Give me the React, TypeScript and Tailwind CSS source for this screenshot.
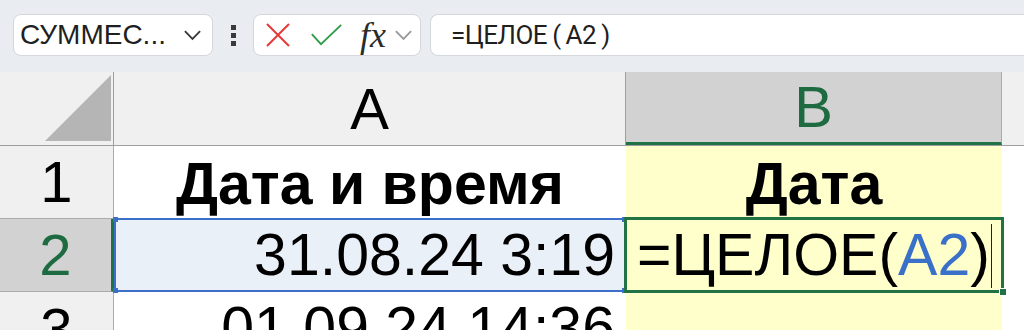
import React from "react";

const cellFont = { fontFamily: '"Liberation Sans", Arial, sans-serif' };

function Chevron({ className }: { className?: string }) {
  return (
    <svg viewBox="0 0 20 12" className={className} fill="none" stroke="currentColor" strokeWidth="2">
      <path d="M2 2l8 8 8-8" />
    </svg>
  );
}

function Toolbar() {
  return (
    <div className="flex h-[72px] items-center bg-[#e9edf1] pl-[13px] pb-[2px]" style={cellFont}>
      <div className="flex h-[42px] w-[200px] items-center justify-between rounded-[8px] border border-[#d4d8dc] bg-white pl-[6px] pr-[10px]">
        <span className="text-[28px] leading-none text-[#1f1f1f]">СУММЕС...</span>
        <Chevron className="h-[12px] w-[19px] text-[#3a3a3a]" />
      </div>
      <div className="ml-[18px] mr-[17px] flex flex-col gap-[3px]">
        <span className="h-[5px] w-[5px] bg-[#3a3a3a]" />
        <span className="h-[5px] w-[5px] bg-[#3a3a3a]" />
        <span className="h-[5px] w-[5px] bg-[#3a3a3a]" />
      </div>
      <div className="flex h-[42px] w-[168px] items-center rounded-[8px] border border-[#d4d8dc] bg-white pl-[11px]">
        <svg viewBox="0 0 26 26" className="h-[26px] w-[26px]" fill="none" stroke="#e53935" strokeWidth="2">
          <path d="M2 2l22 22M24 2L2 24" />
        </svg>
        <svg viewBox="0 0 34 24" className="ml-[19px] h-[22px] w-[33px]" fill="none" stroke="#2e9b48" strokeWidth="2">
          <path d="M1 11l10 11L33 1" />
        </svg>
        <span
          className="ml-[17px] text-[36px] italic leading-none text-[#2b2b2b]"
          style={{ fontFamily: '"Liberation Serif", "Times New Roman", serif' }}
        >
          fx
        </span>
        <Chevron className="ml-[8px] h-[12px] w-[19px] text-[#9a9a9a]" />
      </div>
      <div className="ml-[9px] flex h-[42px] flex-1 items-center rounded-l-[8px] border border-r-0 border-[#d4d8dc] bg-white pl-[20px]">
        <span
          className="text-[26px] leading-none text-[#1f1f1f]"
          style={{ fontFamily: '"Liberation Sans Narrow", "Roboto", sans-serif', letterSpacing: "-0.5px" }}
        >
          =ЦЕЛОЕ<span className="mx-[5px]">(</span>А2<span className="ml-[5px]">)</span>
        </span>
      </div>
    </div>
  );
}

function Corner() {
  return (
    <div className="relative h-full w-[114px] border-r border-[#9e9e9e] bg-[#f0f0f0]">
      <svg viewBox="0 0 66 66" className="absolute left-[45px] top-[3px] h-[66px] w-[66px]">
        <polygon points="66,0 66,66 0,66" fill="#b5b5b5" />
      </svg>
    </div>
  );
}

export default function App() {
  return (
    <div className="h-[330px] w-[1024px] overflow-hidden bg-white" style={cellFont}>
      <Toolbar />
      <div className="flex h-[74px] border-b border-[#9e9e9e] bg-[#f0f0f0]">
        <Corner />
        <div className="flex w-[512px] items-center justify-center border-r border-[#9e9e9e] text-[58px] leading-none text-black">
          A
        </div>
        <div className="flex w-[376px] items-center justify-center border-r border-[#ababab] border-b-[3px] border-b-[#217346] bg-[#d2d2d2] text-[58px] leading-none text-[#1e6b41]">
          B
        </div>
        <div className="flex-1" />
      </div>

      <div className="relative">
        <div className="flex h-[73px]">
          <div className="flex w-[114px] items-center justify-center border-r border-b border-[#ababab] bg-[#f0f0f0] text-[58px] leading-none text-black">
            1
          </div>
          <div className="flex w-[512px] items-center justify-center pt-[4px] text-[59px] font-bold leading-none text-black">
            Дата и время
          </div>
          <div className="flex w-[376px] items-center justify-center bg-[#ffffcc] pt-[4px] text-[59px] font-bold leading-none text-black">
            Дата
          </div>
        </div>
        <div className="flex h-[73px]">
          <div className="flex w-[114px] items-center justify-center border-r-[3px] border-b border-r-[#217346] border-b-[#ababab] bg-[#d2d2d2] text-[58px] leading-none text-[#1e6b41]">
            2
          </div>
          <div className="flex w-[512px] items-center justify-end bg-[#eaf0f8] pr-[11px] text-[59px] leading-none text-black">
            31.08.24 3:19
          </div>
          <div className="flex w-[376px] items-center bg-[#ffffcc] pl-[11px] text-[59px] leading-none text-black">
            =ЦЕЛОЕ(<span className="text-[#3a70c8]">A2</span>)
            <span className="ml-[1px] h-[64px] w-[1px] bg-[#1a1a5a]" />
          </div>
        </div>
        <div className="flex h-[73px]">
          <div className="flex w-[114px] items-center justify-center border-r border-[#ababab] bg-[#f0f0f0] text-[58px] leading-none text-black">
            3
          </div>
          <div className="flex w-[512px] items-center justify-end pr-[11px] text-[59px] leading-none text-black">
            01.09.24 14:36
          </div>
          <div className="w-[376px] bg-[#ffffcc]" />
        </div>

        {/* A2 reference highlight */}
        <div className="pointer-events-none absolute left-[114px] top-[72px] h-[74px] w-[512px] border-2 border-[#3b6fc9]">
          <span className="absolute -left-[3px] -top-[3px] h-[5px] w-[5px] bg-[#3b6fc9]" />
          <span className="absolute -right-[3px] -top-[3px] h-[5px] w-[5px] bg-[#3b6fc9]" />
          <span className="absolute -left-[3px] -bottom-[3px] h-[5px] w-[5px] bg-[#3b6fc9]" />
          <span className="absolute -right-[3px] -bottom-[3px] h-[5px] w-[5px] bg-[#3b6fc9]" />
        </div>
        {/* B2 active cell */}
        <div className="pointer-events-none absolute left-[624px] top-[71px] h-[76px] w-[380px] border-[3px] border-[#217346]">
          <span className="absolute -right-[6px] -bottom-[6px] h-[8px] w-[8px] border border-white bg-[#217346]" />
        </div>
      </div>
    </div>
  );
}
